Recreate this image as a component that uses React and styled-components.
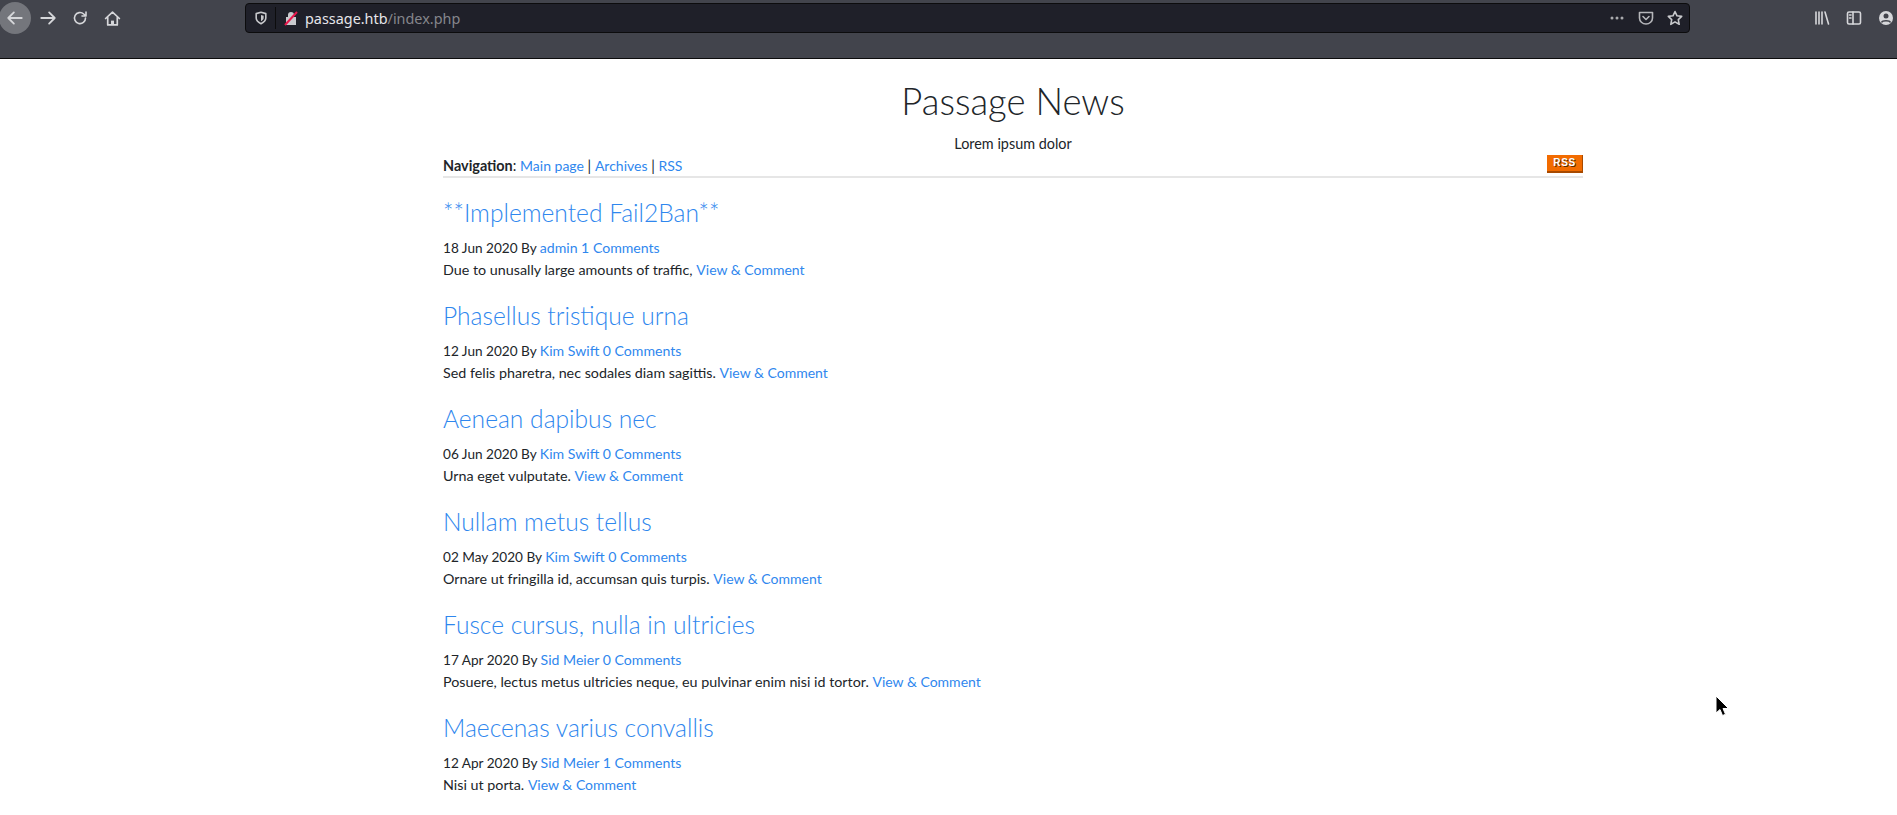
import styled, { createGlobalStyle } from 'styled-components';

const posts = [
  { title: '**Implemented Fail2Ban**', date: '18 Jun 2020', author: 'admin', comments: 1, text: 'Due to unusally large amounts of traffic,' },
  { title: 'Phasellus tristique urna', date: '12 Jun 2020', author: 'Kim Swift', comments: 0, text: 'Sed felis pharetra, nec sodales diam sagittis.' },
  { title: 'Aenean dapibus nec', date: '06 Jun 2020', author: 'Kim Swift', comments: 0, text: 'Urna eget vulputate.' },
  { title: 'Nullam metus tellus', date: '02 May 2020', author: 'Kim Swift', comments: 0, text: 'Ornare ut fringilla id, accumsan quis turpis.' },
  { title: 'Fusce cursus, nulla in ultricies', date: '17 Apr 2020', author: 'Sid Meier', comments: 0, text: 'Posuere, lectus metus ultricies neque, eu pulvinar enim nisi id tortor.' },
  { title: 'Maecenas varius convallis', date: '12 Apr 2020', author: 'Sid Meier', comments: 1, text: 'Nisi ut porta.' },
];

const GlobalStyle = createGlobalStyle`
  html, body {
    margin: 0;
    height: 100%;
    overflow: hidden;
    background: #fff;
  }
  body {
    font-family: 'Lato', 'Liberation Sans', sans-serif;
    font-size: 14.4px;
    color: #212529;
  }
  a {
    color: #2f87ee;
    text-decoration: none;
  }
`;

const Toolbar = styled.header`
  height: 59px;
  box-sizing: border-box;
  background: #42444c;
  border-bottom: 1px solid #0c0c0d;
  display: flex;
  align-items: flex-start;
  padding-top: 3px;
`;
const NavButtons = styled.div`
  display: flex;
  align-items: center;
  width: 245px;
  height: 30px;
  flex-shrink: 0;
`;
const BackButton = styled.div`
  width: 32px;
  height: 32px;
  border-radius: 50%;
  background: #74767c;
  margin-left: -1px;
  margin-right: 1px;
  display: flex;
  align-items: center;
  justify-content: center;
`;
const ToolIcon = styled.div`
  width: 32px;
  height: 30px;
  display: flex;
  align-items: center;
  justify-content: center;
`;
const UrlBar = styled.div`
  width: 1445px;
  height: 30px;
  box-sizing: border-box;
  background: #1f2029;
  border: 1px solid #0c0c0d;
  border-radius: 4px;
  display: flex;
  align-items: center;
  padding: 0 6px 0 8px;
  font-family: 'Noto Sans', sans-serif;
  font-size: 14.4px;
`;
const Divider = styled.span`
  width: 1px;
  height: 22px;
  background: #0c0c0d;
  margin: 0 7px 0 7px;
`;
const Domain = styled.span`
  color: #e6e6ea;
  margin-left: 6px;
`;
const Path = styled.span`
  color: #85868c;
`;
const UrlActions = styled.div`
  margin-left: auto;
  display: flex;
  align-items: center;
  gap: 13px;
`;
const SideIcons = styled.div`
  display: flex;
  align-items: center;
  height: 30px;
  margin-left: 124px;
  gap: 16px;
`;

const Page = styled.main`
  width: 1140px;
  margin-left: 443px;
`;
const Title = styled.h1`
  margin: 0;
  padding-top: 18px;
  font-size: 36.5px;
  font-weight: 300;
  line-height: 48px;
  text-align: center;
`;
const Subtitle = styled.p`
  margin: 0;
  padding-top: 8px;
  line-height: 22px;
  text-align: center;
`;
const NavRow = styled.nav`
  display: flex;
  justify-content: space-between;
  align-items: center;
  height: 21px;
  border-bottom: 2px solid #e6e6e6;
  a {
    font-size: 14px;
  }
`;
const RssBadge = styled.span`
  width: 36px;
  height: 18px;
  box-sizing: border-box;
  margin-top: -4px;
  background: #f26b00;
  border-right: 1px solid #a84a00;
  border-bottom: 2px solid #a84a00;
  color: #fff;
  font-family: 'Liberation Sans', sans-serif;
  font-size: 10px;
  font-weight: 700;
  letter-spacing: 0.6px;
  line-height: 16px;
  text-align: center;
  text-shadow: 1px 1px 0 #5c2a00;
`;
const PostList = styled.section`
  padding-top: 18px;
`;
const Post = styled.article`
  height: 103px;
`;
const PostTitle = styled.h2`
  margin: 0;
  font-size: 24.6px;
  font-weight: 300;
  line-height: 34px;
  padding-bottom: 7px;
`;
const Meta = styled.p`
  margin: 0;
  font-size: 13.6px;
  line-height: 21px;
  a {
    font-size: 14.1px;
  }
`;
const Summary = styled.p`
  margin: 0;
  font-size: 14.3px;
  line-height: 21px;
  a {
    font-size: 14px;
  }
`;
const Cursor = styled.svg`
  position: absolute;
  left: 1715px;
  top: 695px;
`;

const Stroke = ({ children, w = 16, h = 16, color = '#d6d7da' }) => (
  <svg width={w} height={h} viewBox="0 0 16 16" fill="none" stroke={color} strokeWidth="1.6" strokeLinecap="round" strokeLinejoin="round">
    {children}
  </svg>
);

function App() {
  return (
    <>
      <GlobalStyle />
      <Toolbar>
        <NavButtons>
          <BackButton>
            <Stroke w={18} h={18}><path d="M14 8H2M7 3L2 8l5 5" /></Stroke>
          </BackButton>
          <ToolIcon>
            <Stroke w={18} h={18}><path d="M2 8h12M9 3l5 5-5 5" /></Stroke>
          </ToolIcon>
          <ToolIcon>
            <Stroke><path d="M13.5 8a5.5 5.5 0 1 1-1.8-4L14 6M14 2v4h-4" /></Stroke>
          </ToolIcon>
          <ToolIcon>
            <svg width="17" height="17" viewBox="0 0 16 16" fill="none" stroke="#d6d7da" strokeWidth="1.6" strokeLinejoin="round" strokeLinecap="round">
              <path d="M1.5 8L8 2l6.5 6M3.5 7v7h9V7" />
              <rect x="6.6" y="10" width="2.8" height="4" fill="#d6d7da" stroke="none" />
            </svg>
          </ToolIcon>
        </NavButtons>
        <UrlBar>
          <svg width="14" height="14" viewBox="0 0 16 16">
            <path d="M8 1.500l5.500 1.500v5c0 3-2.500 5-5.500 6.500C5 13 2.500 11 2.500 8V3z" fill="none" stroke="#c8c9cc" strokeWidth="1.800" strokeLinejoin="round" />
            <path d="M8 4.500l3 .8V8c0 1.500-1.200 2.800-3 3.800z" fill="#c8c9cc" />
          </svg>
          <Divider />
          <svg width="16" height="16" viewBox="0 0 16 16">
            <path d="M5 7V5a3 3 0 0 1 6 0v2h2v8H3V7z" fill="#c9cace" />
            <path d="M2 15L14 2" stroke="#e8174b" strokeWidth="2" />
          </svg>
          <Domain>passage.htb<Path>/index.php</Path></Domain>
          <UrlActions>
            <svg width="16" height="16" viewBox="0 0 16 16" fill="#a9aaae">
              <circle cx="3" cy="8" r="1.500" /><circle cx="8" cy="8" r="1.500" /><circle cx="13" cy="8" r="1.500" />
            </svg>
            <Stroke color="#b5b6ba"><path d="M1.500 2.500h13V8a6.500 6 0 0 1-13 0zM5 6.500l3 3 3-3" /></Stroke>
            <Stroke color="#c8c9cc"><path d="M8 1.500l2 4.300 4.700.6-3.400 3.200.9 4.700L8 11.900l-4.200 2.400.9-4.700L1.300 6.400 6 5.800z" /></Stroke>
          </UrlActions>
        </UrlBar>
        <SideIcons>
          <Stroke><path d="M2 2v12M5 2v12M8 2v12M11 2l3.500 12" /></Stroke>
          <Stroke><rect x="1.500" y="2" width="13" height="12" rx="1.500" /><path d="M7 2v12M3.500 5h1.500M3.500 8h1.500" /></Stroke>
          <svg width="16" height="16" viewBox="0 0 16 16">
            <circle cx="8" cy="8" r="7" fill="#d6d7da" />
            <circle cx="8" cy="6" r="2.500" fill="#42444c" />
            <path d="M3.500 12.500c1-2.500 8-2.500 9 0" stroke="#42444c" strokeWidth="1.500" fill="none" />
          </svg>
        </SideIcons>
      </Toolbar>
      <Page>
        <Title>Passage News</Title>
        <Subtitle>Lorem ipsum dolor</Subtitle>
        <NavRow>
          <span>
            <b>Navigation</b>: <a href="#main">Main page</a> | <a href="#archives">Archives</a> | <a href="#rss">RSS</a>
          </span>
          <RssBadge>RSS</RssBadge>
        </NavRow>
        <PostList>
          {posts.map((post) => (
            <Post key={post.title}>
              <PostTitle><a href="#post">{post.title}</a></PostTitle>
              <Meta>
                {post.date} By <a href="#author">{post.author}</a> <a href="#comments">{post.comments} Comments</a>
              </Meta>
              <Summary>
                {post.text} <a href="#view">View &amp; Comment</a>
              </Summary>
            </Post>
          ))}
        </PostList>
      </Page>
      <Cursor width="16" height="24" viewBox="0 0 16 24">
        <path d="M1 1v17l4-3.500 2.500 6 3-1.200-2.500-5.800h5.500z" fill="#000" stroke="#fff" strokeWidth="1" />
      </Cursor>
    </>
  );
}

export default App;
